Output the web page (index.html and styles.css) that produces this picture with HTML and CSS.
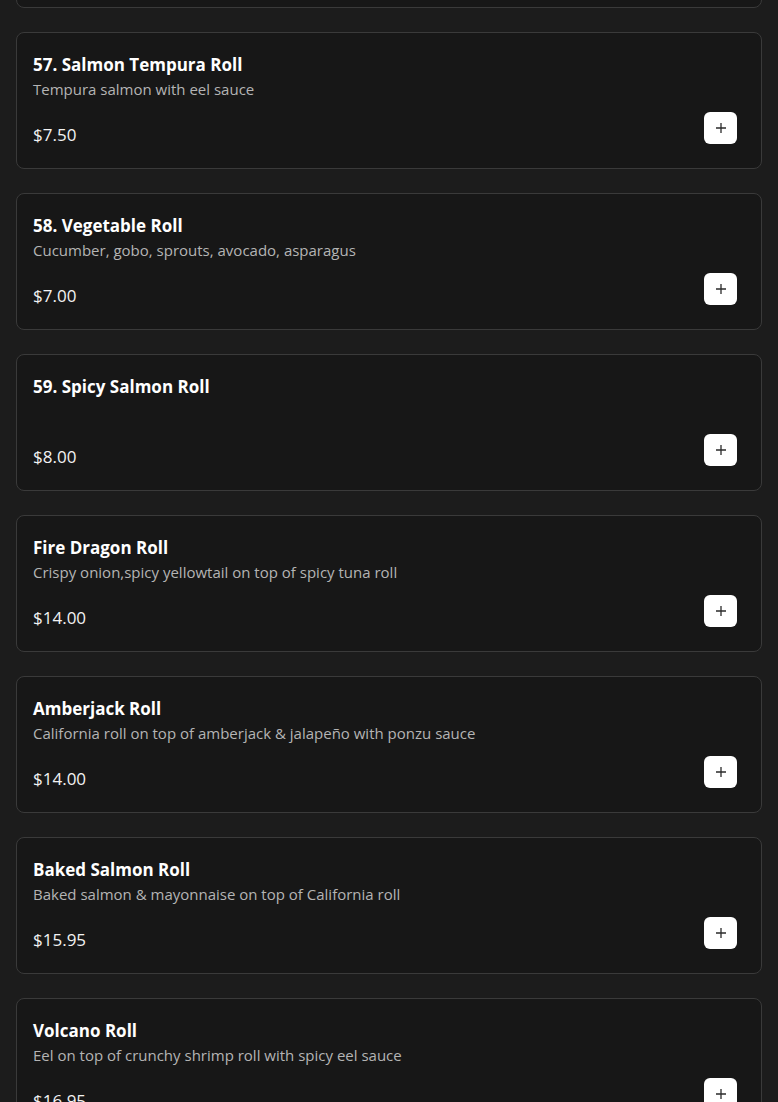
FILE: index.html
```html
<!DOCTYPE html>
<html lang="en">
<head>
<meta charset="utf-8">
<title>Menu</title>
<link rel="stylesheet" href="styles.css">
</head>
<body>
<div class="list">
  <div class="card card-offscreen" aria-hidden="true"></div>
  <div class="card">
    <div class="title">57. Salmon Tempura Roll</div>
    <div class="desc">Tempura salmon with eel sauce</div>
    <div class="row"><span class="price">$7.50</span><button class="add" aria-label="Add"><svg viewBox="0 0 12 12" width="12" height="12"><path d="M6 1v10M1 6h10" stroke="#2b2b2b" stroke-width="1.3" fill="none"/></svg></button></div>
  </div>
  <div class="card">
    <div class="title">58. Vegetable Roll</div>
    <div class="desc">Cucumber, gobo, sprouts, avocado, asparagus</div>
    <div class="row"><span class="price">$7.00</span><button class="add" aria-label="Add"><svg viewBox="0 0 12 12" width="12" height="12"><path d="M6 1v10M1 6h10" stroke="#2b2b2b" stroke-width="1.3" fill="none"/></svg></button></div>
  </div>
  <div class="card">
    <div class="title">59. Spicy Salmon Roll</div>
    <div class="desc"></div>
    <div class="row"><span class="price">$8.00</span><button class="add" aria-label="Add"><svg viewBox="0 0 12 12" width="12" height="12"><path d="M6 1v10M1 6h10" stroke="#2b2b2b" stroke-width="1.3" fill="none"/></svg></button></div>
  </div>
  <div class="card">
    <div class="title">Fire Dragon Roll</div>
    <div class="desc">Crispy onion,spicy yellowtail on top of spicy tuna roll</div>
    <div class="row"><span class="price">$14.00</span><button class="add" aria-label="Add"><svg viewBox="0 0 12 12" width="12" height="12"><path d="M6 1v10M1 6h10" stroke="#2b2b2b" stroke-width="1.3" fill="none"/></svg></button></div>
  </div>
  <div class="card">
    <div class="title">Amberjack Roll</div>
    <div class="desc">California roll on top of amberjack &amp; jalapeño with ponzu sauce</div>
    <div class="row"><span class="price">$14.00</span><button class="add" aria-label="Add"><svg viewBox="0 0 12 12" width="12" height="12"><path d="M6 1v10M1 6h10" stroke="#2b2b2b" stroke-width="1.3" fill="none"/></svg></button></div>
  </div>
  <div class="card">
    <div class="title">Baked Salmon Roll</div>
    <div class="desc">Baked salmon &amp; mayonnaise on top of California roll</div>
    <div class="row"><span class="price">$15.95</span><button class="add" aria-label="Add"><svg viewBox="0 0 12 12" width="12" height="12"><path d="M6 1v10M1 6h10" stroke="#2b2b2b" stroke-width="1.3" fill="none"/></svg></button></div>
  </div>
  <div class="card">
    <div class="title">Volcano Roll</div>
    <div class="desc">Eel on top of crunchy shrimp roll with spicy eel sauce</div>
    <div class="row"><span class="price">$16.95</span><button class="add" aria-label="Add"><svg viewBox="0 0 12 12" width="12" height="12"><path d="M6 1v10M1 6h10" stroke="#2b2b2b" stroke-width="1.3" fill="none"/></svg></button></div>
  </div>
</div>
</body>
</html>
```
FILE: styles.css
```css
html, body {
  margin: 0;
  padding: 0;
  background: #1c1c1c;
  overflow: hidden;
}
body {
  font-family: "Open Sans", "DejaVu Sans", sans-serif;
  color: #fff;
}
.list {
  display: flex;
  flex-direction: column;
  gap: 24px;
  padding: 0 16px;
  margin-top: -129px;
}
.card {
  height: 137px;
  box-sizing: border-box;
  border: 1px solid #3a3a3a;
  border-radius: 8px;
  background: #171717;
  padding: 20px 24px 20px 16px;
  display: flex;
  flex-direction: column;
}
.title {
  font-size: 17px;
  font-weight: 700;
  line-height: 24px;
  color: #fff;
}
.desc {
  font-size: 15px;
  line-height: 24px;
  min-height: 24px;
  color: #b4b4b4;
}
.row {
  margin-top: 11px;
  display: flex;
  justify-content: space-between;
  align-items: flex-end;
}
.price {
  font-size: 17px;
  line-height: 24px;
  color: #f2f2f2;
}
.add {
  width: 33px;
  height: 32px;
  margin-bottom: 3px;
  border: none;
  border-radius: 6px;
  background: #fff;
  padding: 0;
  display: flex;
  align-items: center;
  justify-content: center;
  cursor: pointer;
}
.add svg {
  display: block;
}
```
